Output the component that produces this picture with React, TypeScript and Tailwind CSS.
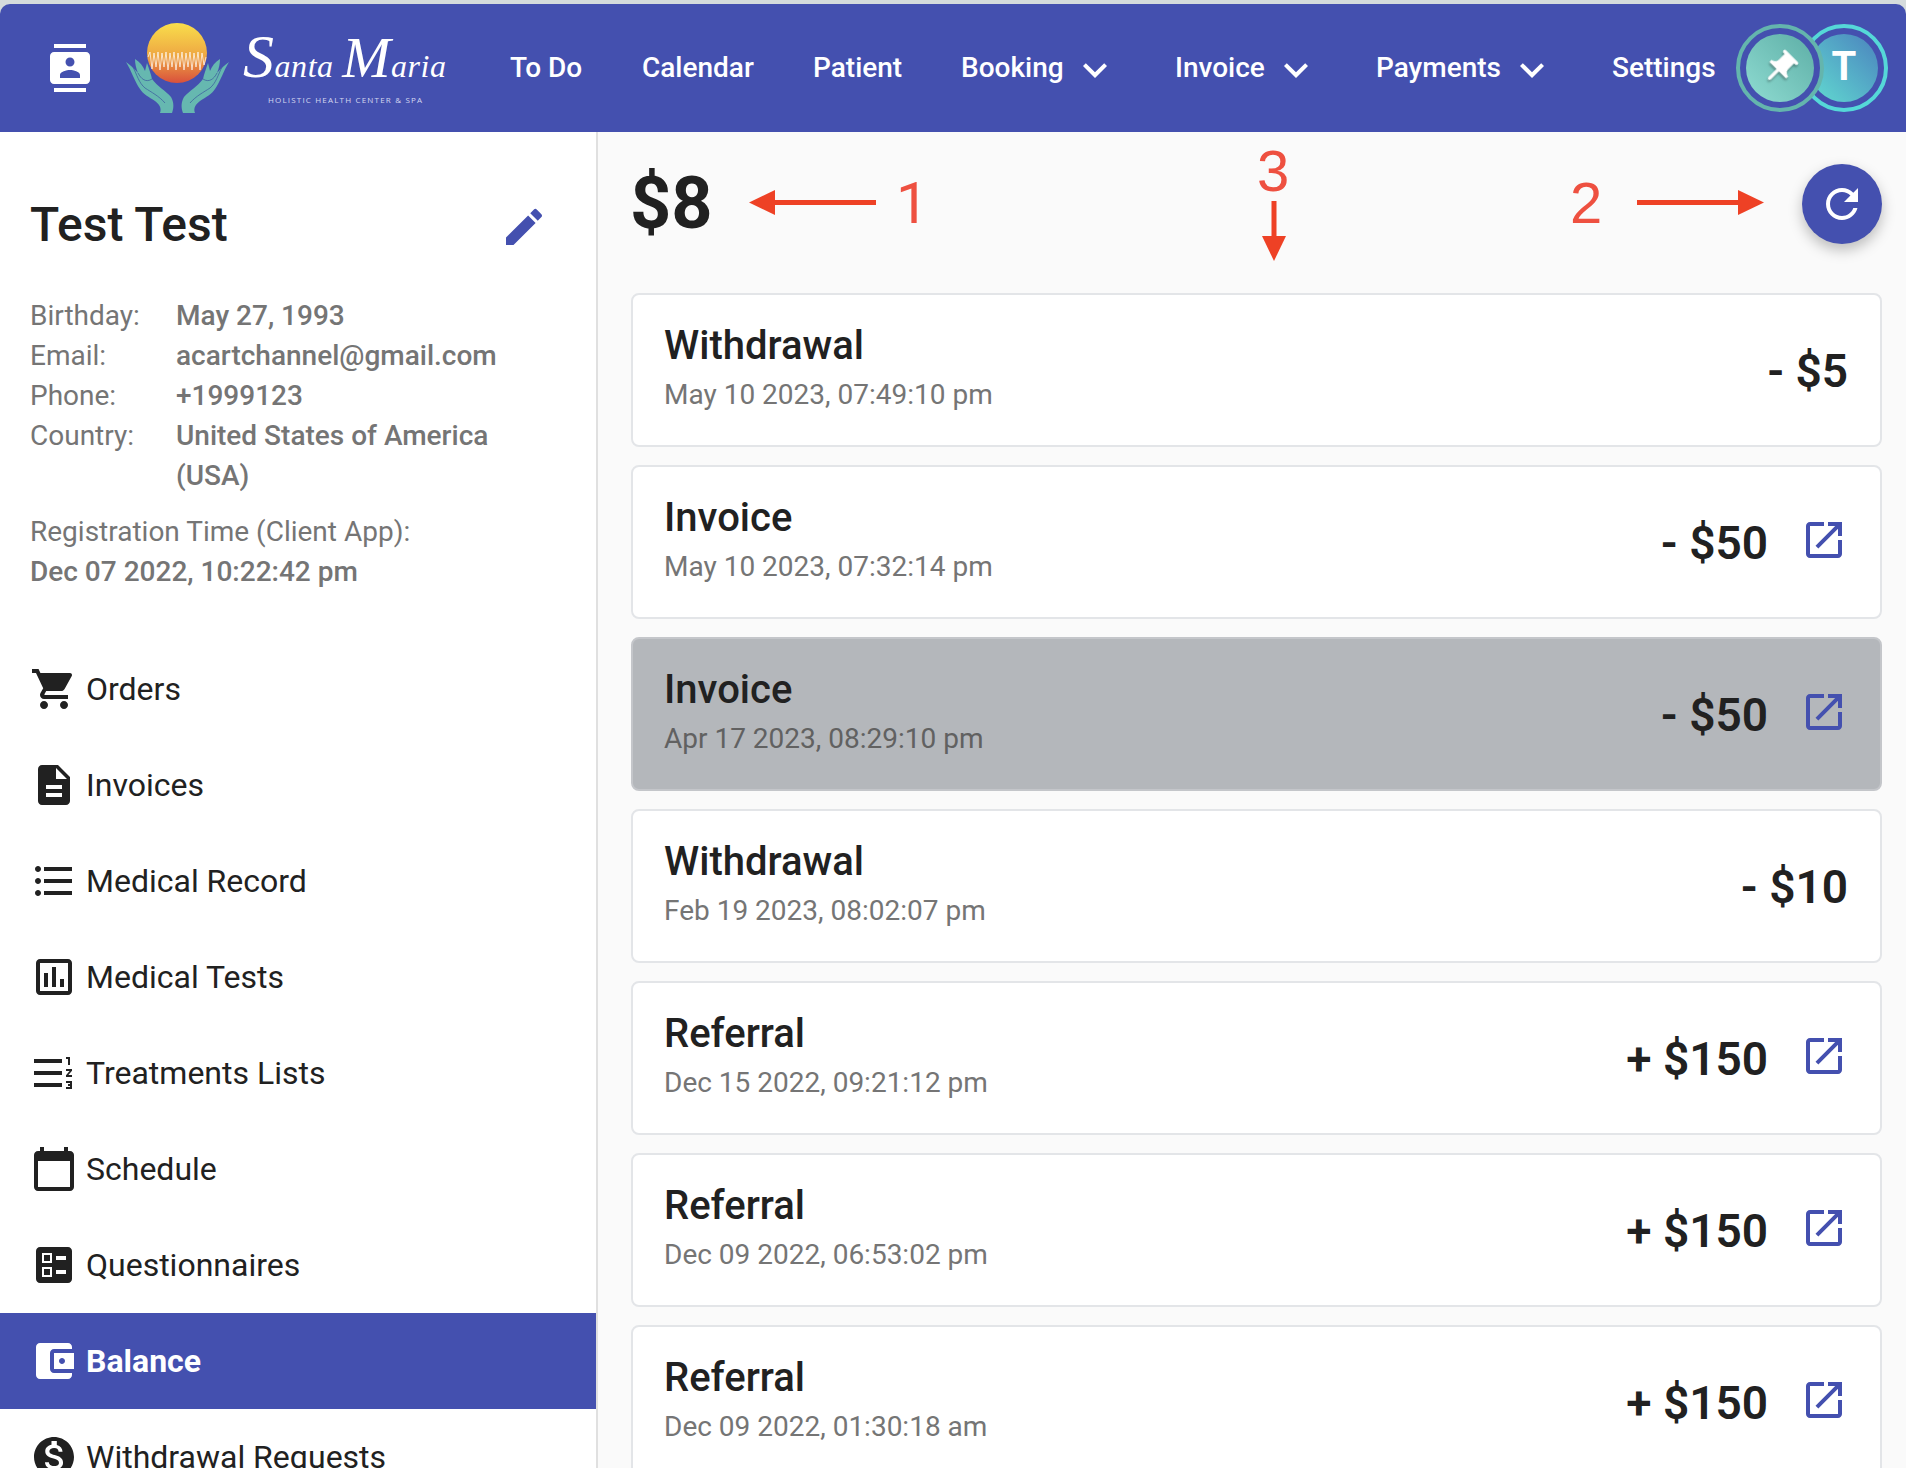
import React from "react";

const P = {
  cart: "M7 18c-1.1 0-1.99.9-1.99 2S5.9 22 7 22s2-.9 2-2-.9-2-2-2zM1 2v2h2l3.6 7.59-1.35 2.45c-.16.28-.25.61-.25.96 0 1.1.9 2 2 2h12v-2H7.42c-.14 0-.25-.11-.25-.25l.03-.12.9-1.63h7.45c.75 0 1.41-.41 1.75-1.03l3.58-6.49c.08-.14.12-.31.12-.48 0-.55-.45-1-1-1H5.21l-.94-2H1zm16 16c-1.1 0-1.99.9-1.99 2s.89 2 1.99 2 2-.9 2-2-.9-2-2-2z",
  doc: "M14 2H6c-1.1 0-1.99.9-1.99 2L4 20c0 1.1.89 2 1.99 2H18c1.1 0 2-.9 2-2V8l-6-6zm2 16H8v-2h8v2zm0-4H8v-2h8v2zm-3-5V3.5L18.5 9H13z",
  list: "M4 10.5c-.83 0-1.5.67-1.5 1.5s.67 1.5 1.5 1.5 1.5-.67 1.5-1.5-.67-1.5-1.5-1.5zm0-6c-.83 0-1.5.67-1.5 1.5S3.17 7.5 4 7.5 5.5 6.83 5.5 6 4.83 4.5 4 4.5zm0 12c-.83 0-1.5.68-1.5 1.5s.68 1.5 1.5 1.5 1.5-.68 1.5-1.5-.67-1.5-1.5-1.5zM7 19h14v-2H7v2zm0-6h14v-2H7v2zm0-8v2h14V5H7z",
  chart: "M19 3H5c-1.1 0-2 .9-2 2v14c0 1.1.9 2 2 2h14c1.1 0 2-.9 2-2V5c0-1.1-.9-2-2-2zm0 16H5V5h14v14zM7 10h2v7H7zm4-3h2v10h-2zm4 6h2v4h-2z",
  numbered: "M18 17h2v.5h-1v1h1v.5h-2v1h3v-4h-3v1zm1-9h1V4h-2v1h1v3zm-1 3h1.8L18 13.1v.9h3v-1h-1.8l1.8-2.1V10h-3v1zM2 5h14v2H2V5zm0 12h14v2H2v-2zm0-6h14v2H2v-2z",
  calendar: "M20 3h-1V1h-2v2H7V1H5v2H4c-1.1 0-2 .9-2 2v16c0 1.1.9 2 2 2h16c1.1 0 2-.9 2-2V5c0-1.1-.9-2-2-2zm0 18H4V8h16v13z",
  ballot: "M13 9.5h5v-2h-5v2zm0 7h5v-2h-5v2zm6 4.5H5c-1.1 0-2-.9-2-2V5c0-1.1.9-2 2-2h14c1.1 0 2 .9 2 2v14c0 1.1-.9 2-2 2zM6 11h5V6H6v5zm1-4h3v3H7V7zM6 18h5v-5H6v5zm1-4h3v3H7v-3z",
  wallet: "M21 18v1c0 1.1-.9 2-2 2H5c-1.11 0-2-.9-2-2V5c0-1.1.89-2 2-2h14c1.1 0 2 .9 2 2v1h-9c-1.11 0-2 .9-2 2v8c0 1.1.89 2 2 2h9zm-9-2h10V8H12v8zm4-2.5c-.83 0-1.5-.67-1.5-1.5s.67-1.5 1.5-1.5 1.5.67 1.5 1.5-.67 1.5-1.5 1.5z",
  money: "M12 2C6.48 2 2 6.48 2 12s4.48 10 10 10 10-4.48 10-10S17.52 2 12 2zm1.41 16.09V20h-2.67v-1.93c-1.71-.36-3.16-1.46-3.27-3.4h1.96c.1 1.05.82 1.87 2.65 1.87 1.96 0 2.4-.98 2.4-1.59 0-.83-.44-1.61-2.67-2.14-2.48-.6-4.18-1.62-4.18-3.67 0-1.72 1.39-2.84 3.11-3.21V4h2.67v1.95c1.86.45 2.79 1.86 2.85 3.39H14.3c-.05-1.11-.64-1.87-2.22-1.87-1.5 0-2.4.68-2.4 1.64 0 .84.65 1.39 2.67 1.91s4.18 1.39 4.18 3.91c-.01 1.83-1.38 2.83-3.12 3.16z",
  edit: "M3 17.25V21h3.75L17.81 9.94l-3.75-3.75L3 17.25zM20.71 7.04c.39-.39.39-1.02 0-1.41l-2.34-2.34a.9959.9959 0 0 0-1.41 0l-1.83 1.83 3.75 3.75 1.83-1.83z",
  open: "M19 19H5V5h7V3H5c-1.11 0-2 .9-2 2v14c0 1.1.89 2 2 2h14c1.1 0 2-.9 2-2v-7h-2v7zM14 3v2h3.59l-9.83 9.83 1.41 1.41L19 6.41V10h2V3h-7z",
  refresh: "M17.65 6.35C16.2 4.9 14.21 4 12 4c-4.42 0-7.99 3.58-7.99 8s3.57 8 7.99 8c3.73 0 6.84-2.55 7.73-6h-2.08c-.82 2.33-3.04 4-5.65 4-3.31 0-6-2.69-6-6s2.69-6 6-6c1.66 0 3.14.69 4.22 1.78L13 11h7V4l-2.35 2.35z",
  contacts: "M20 0H4v2h16V0zM4 24h16v-2H4v2zM20 4H4c-1.1 0-2 .9-2 2v12c0 1.1.9 2 2 2h16c1.1 0 2-.9 2-2V6c0-1.1-.9-2-2-2zm-8 2.75c1.24 0 2.25 1.01 2.25 2.25s-1.01 2.25-2.25 2.25S9.75 10.24 9.75 9 10.76 6.75 12 6.75zM17 17H7v-1.5c0-1.67 3.33-2.5 5-2.5s5 .83 5 2.5V17z",
  pin: "M16 9V4h1c.55 0 1-.45 1-1s-.45-1-1-1H7c-.55 0-1 .45-1 1s.45 1 1 1h1v5c0 1.66-1.34 3-3 3v2h5.97v7l1 1 1-1v-7H19v-2c-1.66 0-3-1.34-3-3z",
  chevron: "M16.59 8.59 12 13.17 7.41 8.59 6 10l6 6 6-6z",
};

function Icon({ d, className }: { d: string; className?: string }) {
  return (
    <svg viewBox="0 0 24 24" fill="currentColor" className={className}>
      <path d={d} />
    </svg>
  );
}

function Logo() {
  const hand = "M-1 39 C4 43 8 46 11 50 C9 45 8 41 8 36 C13 39 16 43 18 48 L20 40 C22 46 24 51 25 56 C30 63 39 68 44 74 C47 79 47 85 45 90 L33 90 C35 85 32 81 28 78 C22 74 16 71 13 66 C8 59 4 47 -1 39Z";
  const lines = "M6 44 C10 52 12 60 18 65 C24 69 32 73 38 80 M11 50 C14 56 19 60 25 56";
  return (
    <svg viewBox="0 0 320 96" className="w-[320px] h-[96px] shrink-0 overflow-visible">
      <defs>
        <linearGradient id="sun" x1="0" y1="0" x2="0" y2="1">
          <stop offset="0" stopColor="#f9de4b" />
          <stop offset="0.55" stopColor="#eea743" />
          <stop offset="1" stopColor="#d9503c" />
        </linearGradient>
      </defs>
      <circle cx="50" cy="30" r="30" fill="url(#sun)" />
      <polyline
        points="21,34 23,29 25,46 27,30 29,44 31,29 33,47 35,30 37,44 39,29 41,47 43,30 45,44 47,29 49,47 51,30 53,44 55,29 57,47 59,30 61,44 63,29 65,47 67,30 69,44 71,29 73,47 75,30 77,42 79,34"
        fill="none"
        stroke="#fff"
        strokeOpacity="0.7"
        strokeWidth="1"
      />
      <path d={hand} fill="#66b8b0" />
      <path d={lines} fill="none" stroke="#3f63a0" strokeWidth="0.8" />
      <g transform="translate(101 0) scale(-1 1)">
        <path d={hand} fill="#66b8b0" />
        <path d={lines} fill="none" stroke="#3f63a0" strokeWidth="0.8" />
      </g>
      <text x="116" y="54" fill="#fff" fontSize="32" fontStyle="italic" fontFamily="'Liberation Serif', serif" textLength="203" lengthAdjust="spacing">
        <tspan fontSize="62">S</tspan>anta <tspan fontSize="58">M</tspan>aria
      </text>
      <text x="141" y="80" fill="#d5d8f0" fontSize="8" fontFamily="'Open Sans', sans-serif" textLength="154" lengthAdjust="spacing">
        HOLISTIC HEALTH CENTER &amp; SPA
      </text>
    </svg>
  );
}

const nav: { label: string; w: string; chevron?: boolean }[] = [
  { label: "To Do", w: "w-[132px]" },
  { label: "Calendar", w: "w-[171px]" },
  { label: "Patient", w: "w-[148px]" },
  { label: "Booking", w: "w-[214px]", chevron: true },
  { label: "Invoice", w: "w-[201px]", chevron: true },
  { label: "Payments", w: "w-[236px]", chevron: true },
];

function Header() {
  return (
    <header className="h-[128px] bg-[#4450af] rounded-t-[10px] flex items-center pl-[46px] pr-[18px] text-white">
      <Icon d={P.contacts} className="w-[48px] h-[48px] shrink-0" />
      <div className="ml-[33px] mt-[6px]">
        <Logo />
      </div>
      <nav className="ml-[63px] flex items-center text-[28px] font-medium leading-[40px]">
        {nav.map((n) => (
          <div key={n.label} className={`${n.w} flex items-center`}>
            <span>{n.label}</span>
            {n.chevron && <Icon d={P.chevron} className="w-[48px] h-[48px] ml-[7px] mt-[4px]" />}
          </div>
        ))}
        <span>Settings</span>
      </nav>
      <div className="ml-auto flex items-center">
        <div className="relative z-10 w-[88px] h-[88px] rounded-full border-4 border-[#64b5ad] bg-[#4450af] flex items-center justify-center">
          <div className="w-[68px] h-[68px] rounded-full bg-gradient-to-tr from-[#8fdcd2] to-[#5daea6] flex items-center justify-center">
            <Icon d={P.pin} className="w-[40px] h-[40px] rotate-45 drop-shadow-[1px_2px_1px_rgba(0,0,0,0.3)]" />
          </div>
        </div>
        <div className="-ml-[24px] w-[88px] h-[88px] rounded-full border-4 border-[#55d8d8] flex items-center justify-center">
          <div className="w-[68px] h-[68px] rounded-full bg-gradient-to-tr from-[#62dcd0] to-[#4b82bd] flex items-center justify-center text-[40px] leading-[40px] font-bold pb-[2px]">
            T
          </div>
        </div>
      </div>
    </header>
  );
}

const menu: { label: string; d: string; active?: boolean }[] = [
  { label: "Orders", d: P.cart },
  { label: "Invoices", d: P.doc },
  { label: "Medical Record", d: P.list },
  { label: "Medical Tests", d: P.chart },
  { label: "Treatments Lists", d: P.numbered },
  { label: "Schedule", d: P.calendar },
  { label: "Questionnaires", d: P.ballot },
  { label: "Balance", d: P.wallet, active: true },
  { label: "Withdrawal Requests", d: P.money },
];

function Sidebar() {
  const info = [
    ["Birthday:", "May 27, 1993"],
    ["Email:", "acartchannel@gmail.com"],
    ["Phone:", "+1999123"],
    ["Country:", "United States of America (USA)"],
  ];
  return (
    <aside className="w-[598px] shrink-0 bg-white border-r-2 border-[#e0e0e0] flex flex-col">
      <div className="pl-[30px] pr-[48px] pt-[65px]">
        <div className="flex items-center justify-between h-[56px]">
          <h1 className="text-[48px] leading-[56px] font-medium text-[#212121]">Test Test</h1>
          <Icon d={P.edit} className="w-[48px] h-[48px] text-[#4450af] mt-[4px]" />
        </div>
        <div className="mt-[43px] text-[28px] leading-[40px] text-[#757575]">
          {info.map(([k, v]) => (
            <div key={k} className="flex">
              <div className="w-[146px] shrink-0">{k}</div>
              <div className="font-medium w-[340px]">{v}</div>
            </div>
          ))}
          <div className="mt-[16px]">Registration Time (Client App):</div>
          <div className="font-medium">Dec 07 2022, 10:22:42 pm</div>
        </div>
      </div>
      <div className="mt-[49px]">
        {menu.map((m) => (
          <div
            key={m.label}
            className={`h-[96px] flex items-center pl-[30px] text-[32px] shrink-0 ${
              m.active ? "bg-[#4450af] text-white font-bold" : "text-[#212121]"
            }`}
          >
            <Icon d={m.d} className="w-[48px] h-[48px] shrink-0" />
            <span className="ml-[8px]">{m.label}</span>
          </div>
        ))}
      </div>
    </aside>
  );
}

const rows: { title: string; date: string; amount: string; open?: boolean; active?: boolean }[] = [
  { title: "Withdrawal", date: "May 10 2023, 07:49:10 pm", amount: "- $5" },
  { title: "Invoice", date: "May 10 2023, 07:32:14 pm", amount: "- $50", open: true },
  { title: "Invoice", date: "Apr 17 2023, 08:29:10 pm", amount: "- $50", open: true, active: true },
  { title: "Withdrawal", date: "Feb 19 2023, 08:02:07 pm", amount: "- $10" },
  { title: "Referral", date: "Dec 15 2022, 09:21:12 pm", amount: "+ $150", open: true },
  { title: "Referral", date: "Dec 09 2022, 06:53:02 pm", amount: "+ $150", open: true },
  { title: "Referral", date: "Dec 09 2022, 01:30:18 am", amount: "+ $150", open: true },
];

function Card({ r }: { r: (typeof rows)[number] }) {
  return (
    <div
      className={`h-[154px] shrink-0 rounded-[8px] border-2 flex items-center pl-[31px] pr-[32px] ${
        r.active ? "bg-[#b4b7bb] border-[#c4c6ca]" : "bg-white border-[#e3e5e8]"
      }`}
    >
      <div className="flex-1 pb-[3px]">
        <div className="text-[40px] leading-[48px] font-medium text-[#212121]">{r.title}</div>
        <div className={`text-[28px] leading-[40px] mt-[5px] ${r.active ? "text-[#616161]" : "text-[#757575]"}`}>{r.date}</div>
      </div>
      <div className="text-[46px] leading-[56px] font-semibold text-[#212121] mt-[1px]">{r.amount}</div>
      {r.open && <Icon d={P.open} className="w-[48px] h-[48px] ml-[32px] mb-[4px] text-[#4450af]" />}
    </div>
  );
}

function Annotations() {
  const red = "#ee4125";
  return (
    <>
      <svg viewBox="0 0 1906 1468" className="absolute inset-0 w-[1906px] h-[1468px] pointer-events-none" fill={red}>
        <rect x="772" y="200" width="104" height="5" />
        <polygon points="749,202.5 775,190 775,215" />
        <rect x="1637" y="200" width="104" height="5" />
        <polygon points="1764,202.5 1738,190 1738,215" />
        <rect x="1271.5" y="201" width="5" height="38" />
        <polygon points="1274,261 1262,236 1286,236" />
      </svg>
      <div className="absolute left-[896px] top-[170px] text-[58px] leading-[66px] text-[#ee5040] font-['Roboto',sans-serif]">1</div>
      <div className="absolute left-[1570px] top-[170px] text-[58px] leading-[66px] text-[#ee5040] font-['Liberation_Sans',sans-serif]">2</div>
      <div className="absolute left-[1257px] top-[138px] text-[58px] leading-[66px] text-[#ee5040] font-['Liberation_Sans',sans-serif]">3</div>
    </>
  );
}

export default function App() {
  return (
    <div className="relative w-[1906px] h-[1468px] overflow-hidden bg-[#d5dbdc] pt-[4px] font-['Roboto',sans-serif]">
      <Header />
      <div className="flex h-[1336px] bg-[#fafafa]">
        <Sidebar />
        <main className="flex-1 min-w-0 pl-[33px] pr-[24px] overflow-hidden">
          <div className="h-[144px] mb-[17px] flex items-center justify-between">
            <div className="text-[72px] leading-[84px] font-bold text-[#212121] -ml-[1px]">$8</div>
            <button className="w-[80px] h-[80px] rounded-full bg-[#4450af] text-white flex items-center justify-center shadow-[0_6px_14px_rgba(0,0,0,0.25)]">
              <Icon d={P.refresh} className="w-[48px] h-[48px]" />
            </button>
          </div>
          <div className="flex flex-col gap-[18px]">
            {rows.map((r, i) => (
              <Card key={i} r={r} />
            ))}
          </div>
        </main>
      </div>
      <Annotations />
    </div>
  );
}
